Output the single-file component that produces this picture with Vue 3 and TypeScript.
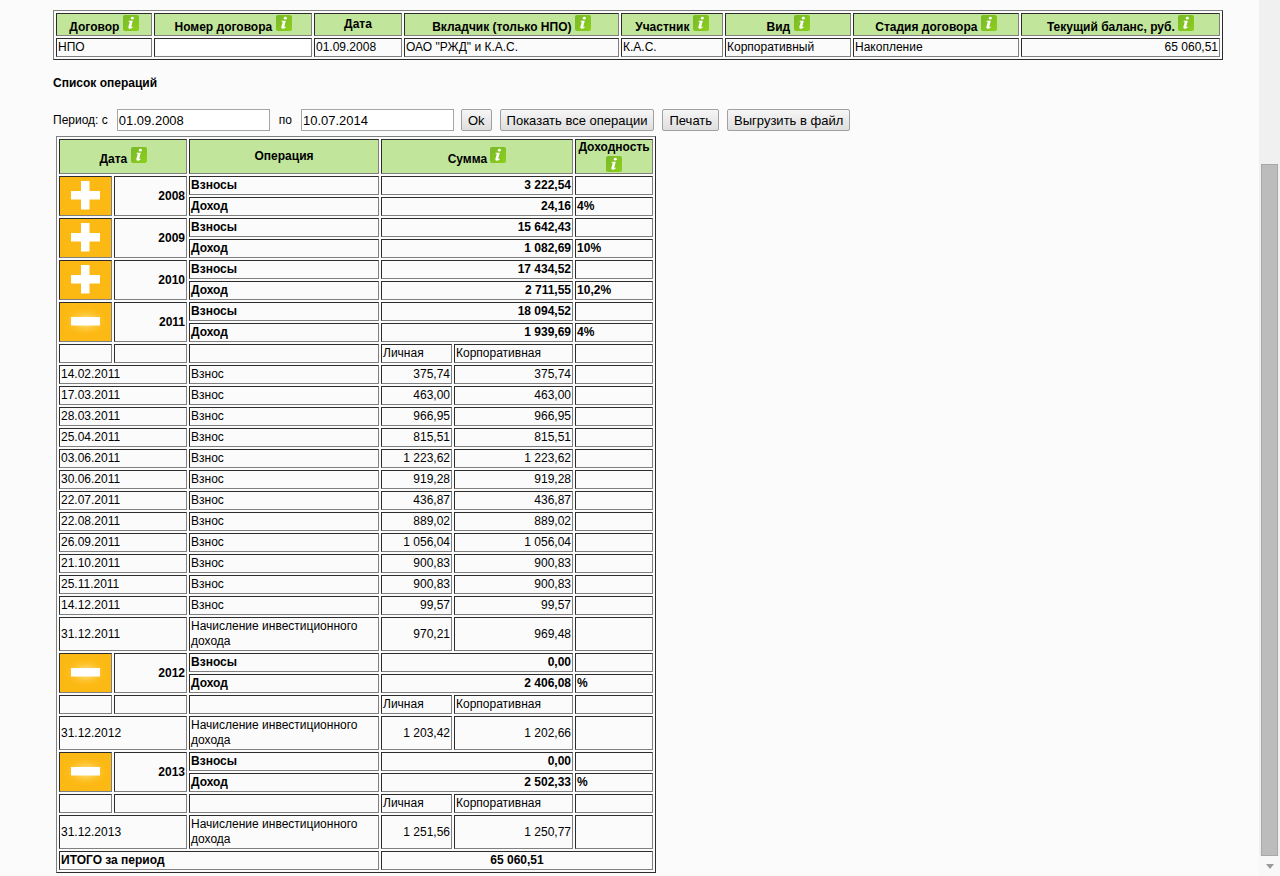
<script setup lang="ts">
import { ref } from 'vue'

interface Detail {
  date: string
  operation: string
  personal: string
  corporate: string
}

interface YearGroup {
  year: string
  payments: string
  income: string
  rate: string
  open: boolean
  details: Detail[]
}

interface ContractColumn {
  title: string
  hint: boolean
}

const contractColumns: ContractColumn[] = [
  { title: 'Договор', hint: true },
  { title: 'Номер договора', hint: true },
  { title: 'Дата', hint: false },
  { title: 'Вкладчик (только НПО)', hint: true },
  { title: 'Участник', hint: true },
  { title: 'Вид', hint: true },
  { title: 'Стадия договора', hint: true },
  { title: 'Текущий баланс, руб.', hint: true },
]

const periodFrom = ref('01.09.2008')
const periodTo = ref('10.07.2014')

const payment = (date: string, amount: string): Detail => ({
  date,
  operation: 'Взнос',
  personal: amount,
  corporate: amount,
})

const accrual = (date: string, personal: string, corporate: string): Detail => ({
  date,
  operation: 'Начисление инвестиционного дохода',
  personal,
  corporate,
})

const groups = ref<YearGroup[]>([
  { year: '2008', payments: '3 222,54', income: '24,16', rate: '4%', open: false, details: [] },
  { year: '2009', payments: '15 642,43', income: '1 082,69', rate: '10%', open: false, details: [] },
  { year: '2010', payments: '17 434,52', income: '2 711,55', rate: '10,2%', open: false, details: [] },
  {
    year: '2011',
    payments: '18 094,52',
    income: '1 939,69',
    rate: '4%',
    open: true,
    details: [
      payment('14.02.2011', '375,74'),
      payment('17.03.2011', '463,00'),
      payment('28.03.2011', '966,95'),
      payment('25.04.2011', '815,51'),
      payment('03.06.2011', '1 223,62'),
      payment('30.06.2011', '919,28'),
      payment('22.07.2011', '436,87'),
      payment('22.08.2011', '889,02'),
      payment('26.09.2011', '1 056,04'),
      payment('21.10.2011', '900,83'),
      payment('25.11.2011', '900,83'),
      payment('14.12.2011', '99,57'),
      accrual('31.12.2011', '970,21', '969,48'),
    ],
  },
  {
    year: '2012',
    payments: '0,00',
    income: '2 406,08',
    rate: '%',
    open: true,
    details: [accrual('31.12.2012', '1 203,42', '1 202,66')],
  },
  {
    year: '2013',
    payments: '0,00',
    income: '2 502,33',
    rate: '%',
    open: true,
    details: [accrual('31.12.2013', '1 251,56', '1 250,77')],
  },
])
</script>

<template>
  <svg class="defs" width="0" height="0" aria-hidden="true">
    <defs>
      <linearGradient id="leaf" x1="0" y1="0" x2="1" y2="1">
        <stop offset="0" stop-color="#79b928" />
        <stop offset="1" stop-color="#8ccf1c" />
      </linearGradient>
      <radialGradient id="glow">
        <stop offset="0" stop-color="#fff0a8" stop-opacity="1" />
        <stop offset="1" stop-color="#fdb913" stop-opacity="0" />
      </radialGradient>
      <symbol id="info" viewBox="0 0 16 16">
        <rect width="16" height="16" rx="2" fill="url(#leaf)" />
        <ellipse cx="9.3" cy="3.2" rx="1.5" ry="1.4" fill="#fff" />
        <path d="M5.8 5.7H9.8L8.2 11.9L9.8 11.6L9.6 12.4Q8.3 13.7 6.7 13.7Q4.9 13.7 5.4 11.8L6.8 6.8L5.5 6.7Z" fill="#fff" />
      </symbol>
    </defs>
  </svg>

  <div class="page">
    <main class="content">
      <table class="grid contract">
        <colgroup>
          <col class="c-type" />
          <col class="c-number" />
          <col class="c-date" />
          <col class="c-investor" />
          <col class="c-member" />
          <col class="c-kind" />
          <col class="c-stage" />
          <col class="c-balance" />
        </colgroup>
        <thead>
          <tr>
            <th v-for="column in contractColumns" :key="column.title" scope="col">
              {{ column.title }}
              <button v-if="column.hint" type="button" class="hint" :aria-label="column.title">
                <svg width="16" height="16"><use href="#info" /></svg>
              </button>
            </th>
          </tr>
        </thead>
        <tbody>
          <tr>
            <td>НПО</td>
            <td><span class="blank"></span></td>
            <td>01.09.2008</td>
            <td>ОАО "РЖД" и К.А.С.</td>
            <td>К.А.С.</td>
            <td>Корпоративный</td>
            <td>Накопление</td>
            <td class="num">65 060,51</td>
          </tr>
        </tbody>
      </table>

      <h2>Список операций</h2>

      <form class="period" @submit.prevent>
        <div class="fields">
          <label for="from">Период: с</label>
          <input id="from" v-model="periodFrom" type="text" />
          <label for="to">по</label>
          <input id="to" v-model="periodTo" type="text" />
        </div>
        <div class="actions">
          <button type="submit">Ok</button>
          <button type="button">Показать все операции</button>
          <button type="button">Печать</button>
          <button type="button">Выгрузить в файл</button>
        </div>
      </form>

      <table class="grid operations">
        <colgroup>
          <col class="o-toggle" />
          <col class="o-year" />
          <col class="o-name" />
          <col class="o-personal" />
          <col class="o-corporate" />
          <col class="o-rate" />
        </colgroup>
        <thead>
          <tr>
            <th colspan="2" scope="col">
              Дата
              <button type="button" class="hint" aria-label="Дата">
                <svg width="16" height="16"><use href="#info" /></svg>
              </button>
            </th>
            <th scope="col">Операция</th>
            <th colspan="2" scope="col">
              Сумма
              <button type="button" class="hint" aria-label="Сумма">
                <svg width="16" height="16"><use href="#info" /></svg>
              </button>
            </th>
            <th scope="col">
              Доходность
              <button type="button" class="hint below" aria-label="Доходность">
                <svg width="16" height="16"><use href="#info" /></svg>
              </button>
            </th>
          </tr>
        </thead>
        <tbody v-for="group in groups" :key="group.year">
          <tr class="sum">
            <td rowspan="2" class="toggle">
              <button
                type="button"
                :aria-label="group.year"
                :aria-expanded="group.open"
                @click="group.open = !group.open"
              >
                <svg width="51" height="38" viewBox="0 0 51 38">
                  <ellipse v-if="group.open" cx="26" cy="18.5" rx="23" ry="15" fill="url(#glow)" />
                  <rect x="11" y="14" width="29" height="8.5" fill="#fff" />
                  <rect v-if="!group.open" x="21" y="4" width="8.5" height="28.5" fill="#fff" />
                </svg>
              </button>
            </td>
            <td rowspan="2" class="num">{{ group.year }}</td>
            <td>Взносы</td>
            <td colspan="2" class="num">{{ group.payments }}</td>
            <td></td>
          </tr>
          <tr class="sum">
            <td>Доход</td>
            <td colspan="2" class="num">{{ group.income }}</td>
            <td>{{ group.rate }}</td>
          </tr>
          <template v-if="group.open">
            <tr>
              <td></td>
              <td></td>
              <td></td>
              <td>Личная</td>
              <td>Корпоративная</td>
              <td></td>
            </tr>
            <tr v-for="row in group.details" :key="row.date">
              <td colspan="2">{{ row.date }}</td>
              <td>{{ row.operation }}</td>
              <td class="num">{{ row.personal }}</td>
              <td class="num">{{ row.corporate }}</td>
              <td></td>
            </tr>
          </template>
        </tbody>
        <tfoot>
          <tr class="sum">
            <td colspan="3">ИТОГО за период</td>
            <td colspan="3" class="total">65 060,51</td>
          </tr>
        </tfoot>
      </table>
    </main>

    <div class="scrollbar" aria-hidden="true">
      <div class="track"></div>
      <div class="thumb"></div>
      <div class="down">
        <svg width="8" height="5" viewBox="0 0 8 5"><path d="M0 0H8L4 5Z" fill="#9a9a9a" /></svg>
      </div>
    </div>
  </div>
</template>

<style>
body {
  margin: 0;
  background: #fbfbfb;
}
</style>

<style scoped>
.defs {
  position: absolute;
}

.page {
  display: flex;
  min-height: 100vh;
  font: 12px/15px "Liberation Sans", Arial, sans-serif;
  color: #000;
}

.content {
  flex: 1;
  min-width: 0;
  padding: 10px 36px 3px 53px;
}

.grid {
  table-layout: fixed;
  border-collapse: separate;
  border-spacing: 2px;
  border: 1px solid;
  border-color: #808080 #2c2c2c #2c2c2c #808080;
}

.grid th,
.grid td {
  box-sizing: border-box;
  height: 19px;
  padding: 1px;
  border: 1px solid;
  border-color: #2c2c2c #808080 #808080 #2c2c2c;
  text-align: left;
  vertical-align: middle;
}

.grid th {
  background: #c1e59b;
  line-height: 13px;
  text-align: center;
}

.grid .num {
  text-align: right;
}

.grid .total {
  text-align: center;
}

.sum {
  font-weight: bold;
}

.contract {
  width: 100%;
}

.c-type { width: 96px; }
.c-number { width: 158px; }
.c-date { width: 88px; }
.c-investor { width: 215px; }
.c-member { width: 102px; }
.c-kind { width: 126px; }
.c-stage { width: 166px; }
.c-balance { width: 199px; }

.hint {
  display: inline-block;
  width: 16px;
  height: 16px;
  padding: 0;
  border: 0;
  background: none;
  vertical-align: baseline;
  cursor: pointer;
}

.hint svg {
  display: block;
}

.hint.below {
  display: block;
  margin: 2px auto 0;
}

.blank {
  display: block;
  height: 15px;
  background: #fff;
}

h2 {
  margin: 16px 0 18px;
  font-size: 12px;
  line-height: 15px;
}

.period {
  display: flex;
  align-items: center;
  gap: 7px;
}

.fields {
  display: flex;
  align-items: center;
  gap: 9px;
}

.fields input {
  box-sizing: border-box;
  width: 153px;
  height: 22px;
  padding: 1px;
  border: 1px solid #a5a5a5;
  background: #fff;
  font: 13px "Liberation Sans", Arial, sans-serif;
  color: #000;
}

.actions {
  display: flex;
  gap: 8px;
}

.actions button {
  height: 22px;
  padding: 0 6px;
  border: 1px solid #a0a0a0;
  border-radius: 2px;
  background: linear-gradient(#f6f6f6, #dedede);
  font: 13px "Liberation Sans", Arial, sans-serif;
  color: #000;
}

.operations {
  width: 600px;
  margin: 5px 0 0 3px;
}

.operations th {
  height: 35px;
}

.o-toggle { width: 53px; }
.o-year { width: 73px; }
.o-name { width: 190px; }
.o-personal { width: 71px; }
.o-corporate { width: 119px; }
.o-rate { width: 78px; }

.grid .toggle {
  padding: 0;
  background: #fdb913;
}

.toggle button {
  display: block;
  width: 100%;
  padding: 0;
  border: 0;
  background: none;
  cursor: pointer;
}

.toggle svg {
  display: block;
  margin: 0 auto;
}

.scrollbar {
  display: flex;
  flex-direction: column;
  width: 17px;
  padding: 0 2px;
  background: #f0f0f0;
}

.track {
  flex: 164;
}

.thumb {
  flex: 692;
  border: 1px solid #a8a8a8;
  background: #bcbcbc;
}

.down {
  display: flex;
  align-items: center;
  justify-content: center;
  height: 20px;
  margin: 0 -2px;
  background: #f8f8f8;
}
</style>
